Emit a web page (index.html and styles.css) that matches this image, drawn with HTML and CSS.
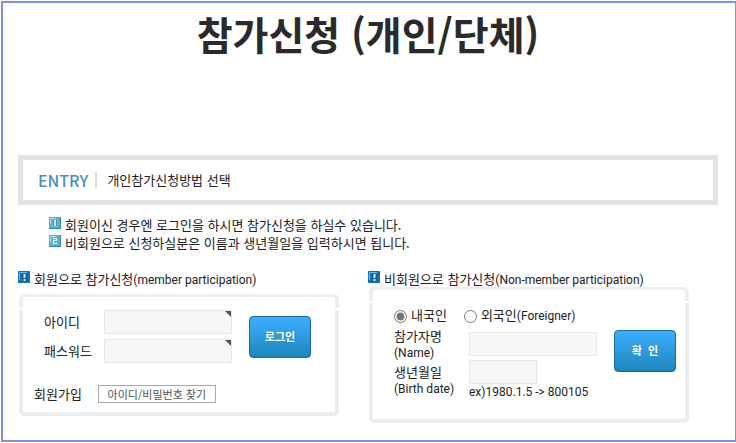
FILE: index.html
```
<!DOCTYPE html>
<html lang="ko">
<head>
	<meta charset="utf-8">
	<title>참가신청 (개인/단체)</title>
	<link rel="stylesheet" href="styles.css">
</head>
<body>

	<div class="frame">
		<h1 class="title">참가신청 (개인/단체)</h1>

		<div class="entry">
			<span class="entry-name">ENTRY</span>
			<span class="entry-text">개인참가신청방법 선택</span>
		</div>

		<ul class="guide">
			<li>
				<svg class="num" viewBox="0 0 12 12"><rect width="12" height="12" rx="1" fill="#2f86a8"/><rect width="11" height="11" rx="1" fill="#5ab4d3"/><path d="M1.5 7V1.5H7" fill="none" stroke="#a5dcec"/><path d="M4.500 3v6M7.500 3v6" stroke="#3f94b5"/><path d="M6 3v6" stroke="#fff" stroke-width="1.500"/></svg>
				<span>회원이신 경우엔 로그인을 하시면 참가신청을 하실수 있습니다.</span>
			</li>
			<li>
				<svg class="num" viewBox="0 0 12 12"><rect width="12" height="12" rx="1" fill="#2f86a8"/><rect width="11" height="11" rx="1" fill="#5ab4d3"/><path d="M1.5 7V1.5H7" fill="none" stroke="#a5dcec"/><path d="M4 3.500h3.500v2h-3v3H8" fill="none" stroke="#fff"/></svg>
				<span>비회원으로 신청하실분은 이름과 생년월일을 입력하시면 됩니다.</span>
			</li>
		</ul>

		<div class="columns">
			<section class="column">
				<h2 class="heading">
					<svg class="mark" viewBox="0 0 12 12"><rect width="12" height="12" rx="1" fill="#0b74b8"/><path d="M1.5 9V1.5H9" fill="none" stroke="#5fc0ea"/><path d="M4 3h5v7H4z" fill="#085c98"/><path d="M6.500 3v4M6.500 8v2" stroke="#d8f2ff" stroke-width="2"/></svg>
					<span>회원으로 참가신청<span class="en">(member participation)</span></span>
				</h2>
				<form class="panel panel-member">
					<div class="login">
						<div class="fields">
							<label for="userid">아이디</label>
							<span class="field"><input class="text" type="text" id="userid"></span>
							<label for="passwd">패스워드</label>
							<span class="field"><input class="text" type="password" id="passwd"></span>
						</div>
						<button class="submit" type="submit">로그인</button>
					</div>
					<div class="links">
						<a class="join" href="#">회원가입</a>
						<button class="find" type="button">아이디/비밀번호 찾기</button>
					</div>
				</form>
			</section>

			<section class="column">
				<h2 class="heading">
					<svg class="mark" viewBox="0 0 12 12"><rect width="12" height="12" rx="1" fill="#0b74b8"/><path d="M1.5 9V1.5H9" fill="none" stroke="#5fc0ea"/><path d="M4 3h5v7H4z" fill="#085c98"/><path d="M6.500 3v4M6.500 8v2" stroke="#d8f2ff" stroke-width="2"/></svg>
					<span>비회원으로 참가신청<span class="en">(Non-member participation)</span></span>
				</h2>
				<form class="panel panel-guest">
					<div class="guest">
						<div class="nation">
							<input class="radio" type="radio" name="nation" id="korean" checked>
							<label for="korean">내국인</label>
							<input class="radio" type="radio" name="nation" id="foreigner">
							<label for="foreigner">외국인<span class="en">(Foreigner)</span></label>
						</div>
						<div class="row">
							<label for="username">참가자명<br><span class="en">(Name)</span></label>
							<input class="text" type="text" id="username">
						</div>
						<div class="row">
							<label for="birth">생년월일<br><span class="en">(Birth date)</span></label>
							<div>
								<input class="text short" type="text" id="birth">
								<p class="hint en">ex)1980.1.5 -&gt; 800105</p>
							</div>
						</div>
					</div>
					<button class="submit" type="submit">확&nbsp; 인</button>
				</form>
			</section>
		</div>
	</div>

</body>
</html>
```

FILE: styles.css
```
*{
	box-sizing: border-box;
}

body{
	margin: 1px 0 1px 1px;
	background: #fff;
	color: #222;
	font-family: "Noto Sans CJK KR", sans-serif;
	font-size: 13px;
	line-height: 16px;
}

.frame{
	border: 2px solid #8490dd;
	border-right-width: 1px;
	padding: 4px 17px 17px 15px;
}

.title{
	margin: 0 0 96px;
	color: #2a2a2a;
	font-size: 39px;
	line-height: 52px;
	text-align: center;
}

.entry{
	display: flex;
	align-items: center;
	height: 50px;
	padding: 0 15px;
	border: 5px solid #e3e3e3;
}

.entry-name{
	padding-right: 7px;
	border-right: 2px solid #ddd;
	color: #4a8fc9;
	font-size: 16px;
	font-weight: 500;
}

.entry-text{
	padding-left: 10px;
}

.en{
	font-family: Roboto, sans-serif;
	font-size: 12px;
}

.guide{
	margin: 11px 0 0;
	padding: 0 0 0 31px;
	list-style: none;
}

.guide li{
	display: flex;
	gap: 4px;
	line-height: 18px;
}

.num,
.mark{
	flex: none;
	width: 12px;
	height: 12px;
}

.num{
	margin-top: 1px;
}

.columns{
	display: grid;
	grid-template-columns: 1fr 1fr;
	margin-top: 19px;
}

.heading{
	display: flex;
	gap: 4px;
	height: 16px;
	margin: 0;
	font-size: 13px;
	font-weight: normal;
	line-height: 16px;
}

/* the side borders are broken once near the top */
.panel{
	position: relative;
	margin: 0 29px 0 1px;
	border: 4px solid #e9eef1;
	border-top-width: 3px;
	border-radius: 5px;
}

.panel::before{
	content: "";
	position: absolute;
	top: 11px;
	left: -4px;
	right: -4px;
	height: 2px;
	background: #fff;
}

.panel-member{
	margin-top: 7px;
	padding: 13px 24px 9px 11px;
}

.panel-guest{
	display: flex;
	align-items: flex-start;
	justify-content: space-between;
	padding: 17px 9px 19px 21px;
}

.login{
	display: flex;
	align-items: flex-start;
	justify-content: space-between;
	padding-left: 10px;
}

.login .submit{
	margin-top: 6px;
}

.fields{
	display: grid;
	grid-template-columns: 60px 128px;
	align-items: center;
	row-gap: 5px;
}

.field{
	position: relative;
}

.field::after{
	content: "";
	position: absolute;
	top: 1px;
	right: 1px;
	border-top: 6px solid #57584b;
	border-left: 6px solid transparent;
}

.text{
	display: block;
	width: 128px;
	height: 24px;
	margin: 0;
	padding: 0 4px;
	border: 1px solid #e3e7e8;
	background: #f7f7f7;
	font: inherit;
}

.short{
	width: 68px;
}

.submit{
	width: 62px;
	height: 42px;
	padding: 0 0 2px;
	border: 1px solid #1a6ba5;
	border-radius: 4px;
	background: linear-gradient(#3daeff, #1c86bb);
	color: #fff;
	font-family: inherit;
	font-size: 11px;
	font-weight: bold;
}

.links{
	display: flex;
	align-items: center;
	gap: 16px;
	margin-top: 22px;
}

.join{
	color: inherit;
	text-decoration: none;
}

.find{
	width: 118px;
	height: 18px;
	padding: 0;
	border: 1px solid #a8a8a8;
	background: #fff;
	color: #555;
	font-family: inherit;
	font-size: 11px;
	line-height: 16px;
}

.nation{
	display: flex;
	align-items: center;
	height: 16px;
	margin-bottom: 5px;
}

.radio{
	width: 13px;
	height: 13px;
	margin: 3px 4px 0 0;
	accent-color: #767676;
}

.nation label + .radio{
	margin-left: 17px;
}

.row{
	display: grid;
	grid-template-columns: 75px auto;
	align-items: center;
}

.row label{
	height: 32px;
}

.hint{
	margin: 0;
}

.panel-guest .submit{
	margin-top: 23px;
}
```
